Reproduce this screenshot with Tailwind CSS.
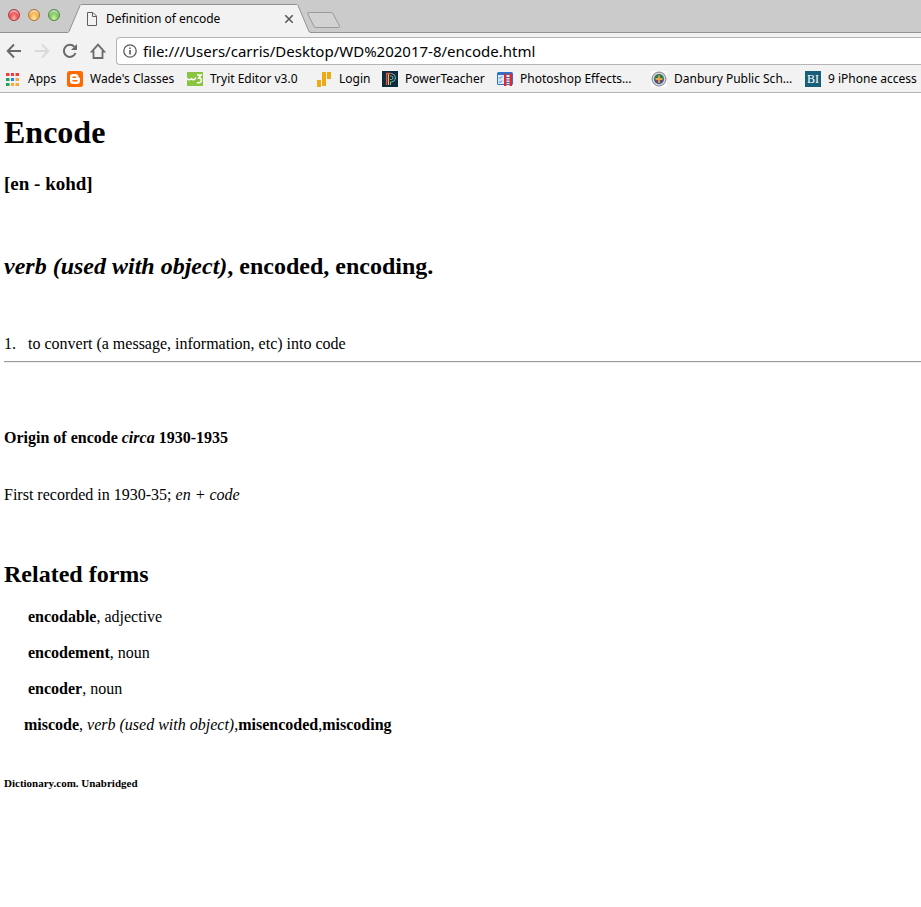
<!DOCTYPE html>
<html lang="en">
<head>
<meta charset="utf-8">
<title>Definition of encode</title>
<script src="https://cdn.jsdelivr.net/npm/@tailwindcss/browser@4"></script>
</head>
<body class="min-h-screen overflow-x-hidden bg-white text-black">
<header class="font-['Noto_Sans','Open_Sans',sans-serif] text-[12px] leading-4">
  <!-- tab strip -->
  <div class="flex h-[33px] items-start border-b border-[#929292] bg-[#cbcbcb]">
    <div class="flex w-[68px] shrink-0 gap-2 pt-[9px] pl-2">
      <button aria-label="Close window" class="size-3 rounded-full border border-[#a33c3c] bg-radial-[at_50%_85%] from-[#ffb0a8] via-[#f0555a] to-[#c8303a] shadow-[inset_0_2px_1px_rgba(255,255,255,0.55)]"></button>
      <button aria-label="Minimize window" class="size-3 rounded-full border border-[#b0733a] bg-radial-[at_50%_85%] from-[#ffe9a0] via-[#f6b34d] to-[#d98e34] shadow-[inset_0_2px_1px_rgba(255,255,255,0.55)]"></button>
      <button aria-label="Zoom window" class="size-3 rounded-full border border-[#4d8a3f] bg-radial-[at_50%_85%] from-[#d2f5a8] via-[#83c765] to-[#559c46] shadow-[inset_0_2px_1px_rgba(255,255,255,0.55)]"></button>
    </div>
    <div class="relative flex h-[33px] w-[243px] shrink-0 items-center pt-1 pr-[17px] pl-[18px]">
      <svg class="absolute inset-0" width="243" height="33" viewBox="0 0 243 33" fill="none"><path d="M0 32.5 L1 31.5 L12 5.5 Q12.6 4.5 13.5 4.5 H228.5 Q229.5 4.5 230 5.5 L241 31.5 L242 32.5 V33 H0Z" fill="#f2f2f2"/><path d="M0 32.5 L1 31.5 L12 5.5 Q12.6 4.5 13.5 4.5 H228.5 Q229.5 4.5 230 5.5 L241 31.5 L243 32.5" stroke="#929292"/></svg>
      <svg class="relative shrink-0" width="12" height="14" viewBox="0 0 12 14" fill="none" stroke="#5f5f5f"><path d="M1.5 .5H7L10.5 4V13.5H1.5Z"/><path d="M6.5 .5V4.5H10.5"/></svg>
      <span class="relative ml-2 grow whitespace-nowrap">Definition of encode</span>
      <button aria-label="Close tab" class="relative"><svg width="10" height="10" viewBox="0 0 10 10" stroke="#5a5a5a" stroke-width="1.6"><path d="M1.3 1.3L8.700 8.700M8.700 1.300L1.300 8.700"/></svg></button>
    </div>
    <button aria-label="New tab" class="-ml-1 pt-3"><svg width="34" height="17" viewBox="0 0 34 17"><path d="M2 .5H24Q25.5 .5 26.2 2L32.5 14Q33 15.5 31.5 15.5H9Q7.5 15.5 6.8 14L.8 2Q.3 .5 2 .5Z" fill="#d2d2d2" stroke="#999"/></svg></button>
  </div>
  <!-- navigation bar -->
  <nav class="flex h-8 items-center bg-[#f2f2f2] pt-1 pl-1.5">
    <button aria-label="Back" class="w-7"><svg width="16" height="16" viewBox="0 0 16 16" fill="none" stroke="#6a6a6a" stroke-width="2"><path d="M8 1.5L1.7 8L8 14.5M2 8H15"/></svg></button>
    <button aria-label="Forward" class="w-7"><svg width="16" height="16" viewBox="0 0 16 16" fill="none" stroke="#dadada" stroke-width="2"><path d="M8 1.5L14.3 8L8 14.5M14 8H1"/></svg></button>
    <button aria-label="Reload" class="w-7"><svg width="16" height="16" viewBox="0 0 16 16" fill="none" stroke="#6a6a6a" stroke-width="2"><path d="M13.5 10A6 6 0 1 1 12.3 3.8"/><path d="M15 1V7H9Z" fill="#6a6a6a" stroke="none"/></svg></button>
    <button aria-label="Home" class="w-[26px]"><svg width="16" height="16" viewBox="0 0 16 16" fill="none" stroke="#6a6a6a" stroke-width="1.8"><path d="M3.500 15V8.600H1.700L8 1.600L14.300 8.600H12.500V15Z"/></svg></button>
    <div class="flex h-7 grow items-center rounded-l border border-r-0 border-[#b4b4b4] bg-white pl-1.5">
      <svg class="shrink-0" width="14" height="14" viewBox="0 0 14 14" fill="none" stroke="#5a5a5a"><circle cx="7" cy="7" r="6.2" stroke-width="1.3"/><path d="M7 6V10.5M7 3.5V5" stroke-width="1.6"/></svg>
      <input aria-label="Address" class="ml-1.5 grow bg-transparent text-[15px] leading-5 outline-none" value="file:///Users/carris/Desktop/WD%202017-8/encode.html">
    </div>
  </nav>
  <!-- bookmarks -->
  <div class="flex h-7 items-center overflow-hidden border-b border-[#b4b4b4] bg-[#f2f2f2] pl-[5px] whitespace-nowrap">
    <a href="#" class="flex w-[62px] shrink-0 items-center gap-[7px]"><svg width="16" height="16" viewBox="0 0 16 16"><path fill="#f23b3f" d="M1 2h3.500v3H1zM6 2h3v3H6zM10.500 2H14v3h-3.500z"/><path fill="#1fa463" d="M1 7h3.500v3H1zM1 12h3.500v3H1z"/><path fill="#2088f0" d="M6 7h3v3H6z"/><path fill="#f9a83a" d="M10.500 7H14v3h-3.500zM6 12h3v3H6zM10.500 12H14v3h-3.500z"/></svg>Apps</a>
    <a href="#" class="flex w-[120px] shrink-0 items-center gap-[7px]"><svg width="16" height="16" viewBox="0 0 16 16"><rect width="16" height="16" rx="2.5" fill="#ff6a00"/><path fill="#fff" d="M6 3H8.5C10.7 3 11.5 4.5 11.5 6C11.5 6.8 13 6.3 13 7.5V9.8C13 12 11.7 13 10 13H6C4 13 3 11.7 3 10V6C3 4.2 4 3 6 3Z"/><path d="M6 6.2H8.5M6 9.8H10" stroke="#ff6a00" stroke-width="1.4" stroke-linecap="round"/></svg>Wade's Classes</a>
    <a href="#" class="flex w-[129px] shrink-0 items-center gap-[7px]"><svg width="16" height="16" viewBox="0 0 16 16" fill="none" stroke="#fff"><path fill="#8ac440" stroke="none" d="M0 1H16V15H0z"/><path stroke-width="1.400" d="M0 7Q1 9 2.500 8.800Q4.300 8.500 4.500 7Q4.900 9 6.500 8.800Q8 8.600 9 6.500"/><path stroke-width="1.600" d="M10 4H14L11.800 7Q14.800 7 14.300 10Q13.300 12.500 10 11.500"/></svg>Tryit Editor v3.0</a>
    <a href="#" class="flex w-[66px] shrink-0 items-center gap-[7px]"><svg width="16" height="16" viewBox="0 0 16 16" fill="#efaa13"><path d="M1 9h4v7H1zM6 1h4v14H6zM11 1h4v7h-4z"/></svg>Login</a>
    <a href="#" class="flex w-[115px] shrink-0 items-center gap-[7px]"><svg width="16" height="16" viewBox="0 0 16 16" fill="none"><path fill="#0b2b3f" d="M0 0H16V16H0z"/><path stroke="#f2b35a" stroke-width="1.200" d="M6.500 3V14"/><path stroke="#f04a37" stroke-width="1.400" d="M4.600 14V2.500H8.500"/><path stroke="#79b9a1" d="M8.500 2.500H9.500Q13.500 3 13.500 7Q13.500 10.500 9.500 11H8.500V14M8 5H9.500Q11 5.200 11 7Q11 8.300 9.500 8.500H8"/></svg>PowerTeacher</a>
    <a href="#" class="flex w-[154px] shrink-0 items-center gap-[7px]"><svg width="16" height="16" viewBox="0 0 16 16" fill="none"><rect y="1" width="16" height="13" rx="1.500" fill="#2d72cc"/><path fill="#d9e9fb" d="M1 4H15V13H1z"/><path stroke="#2d72cc" d="M2 6.500L3 7.500L5 5.500M2 10.500L3 11.500L5 9.500M9 6.500H13M9 9H13M9 11.500H13"/><path stroke="#ee2222" stroke-width="2.400" d="M8.200 2.500V15M13.800 2.500V15"/></svg>Photoshop Effects…</a>
    <a href="#" class="flex w-[154px] shrink-0 items-center gap-[7px]"><svg width="16" height="16" viewBox="0 0 16 16" fill="none"><path fill="#fff" d="M0 0H16V16H0z"/><circle cx="8" cy="8" r="7" fill="#d7d5dc" stroke="#85818e"/><circle cx="8" cy="8" r="5" fill="#287a4f"/><path fill="#3c4f9b" d="M3.5 8H12.5Q12 12.5 8 13Q4 12.5 3.5 8Z"/><path stroke="#e5a548" stroke-width="1.8" d="M8 4.500V12M4.500 8H11.500"/><path stroke="#b13a32" d="M5 10H7M9 10H11"/></svg>Danbury Public Sch…</a>
    <a href="#" class="flex shrink-0 items-center gap-[7px]"><span class="flex size-4 items-center justify-center bg-[#185d7a] font-['Liberation_Serif',serif] text-[12px] text-white">BI</span>9 iPhone access</a>
  </div>
</header>
<main class="pl-1 font-['Liberation_Serif',serif] text-base leading-[18px]">
  <h1 class="pt-[21px] text-[32px] leading-9 font-bold">Encode</h1>
  <h3 class="mt-[23px] text-[19px] leading-[22px] font-bold">[en - kohd]</h3>
  <h2 class="mt-[57px] text-2xl leading-7 font-bold"><i>verb (used with object)</i>, encoded, encoding.</h2>
  <p class="mt-[55px] flex"><span class="w-6 shrink-0">1.</span>to convert (a message, information, etc) into code</p>
  <hr class="mt-2 border-t border-b border-t-[#9a9a9a] border-b-[#eeeeee]">
  <h4 class="mt-[66px] font-bold">Origin of encode <i>circa</i> 1930-1935</h4>
  <p class="mt-[39px]">First recorded in 1930-35; <i>en + code</i></p>
  <h2 class="mt-14 text-2xl leading-7 font-bold">Related forms</h2>
  <div class="mt-5 flex flex-col gap-[18px] pl-5">
    <p class="pl-1"><b>encodable</b>, adjective</p>
    <p class="pl-1"><b>encodement</b>, noun</p>
    <p class="pl-1"><b>encoder</b>, noun</p>
    <p><b>miscode</b>, <i>verb (used with object)</i>,<b>misencoded</b>,<b>miscoding</b></p>
  </div>
  <h6 class="mt-[43px] text-[11px] leading-3 font-bold">Dictionary.com. Unabridged</h6>
</main>
</body>
</html>
